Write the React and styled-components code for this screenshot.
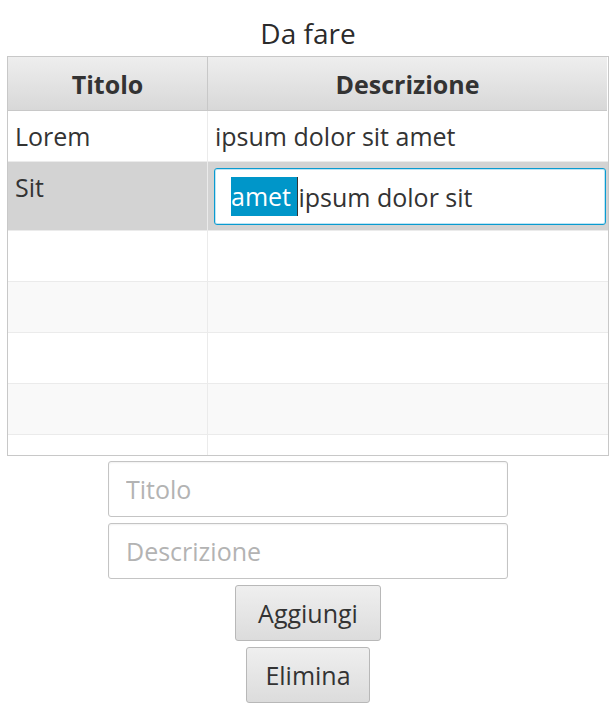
import React from 'react';
import styled, { createGlobalStyle, css } from 'styled-components';

const GlobalStyle = createGlobalStyle`
    html, body {
        margin: 0;
        padding: 0;
        background: #ffffff;
    }
    body {
        font-family: 'Open Sans', 'Noto Sans', sans-serif;
        color: #333333;
    }
`;

const Page = styled.div`
    width: 616px;
    height: 715px;
    display: flex;
    flex-direction: column;
    align-items: center;
    box-sizing: border-box;
    padding: 0 7px;
    background: #ffffff;
`;

const Title = styled.h1`
    margin: 0 0 4px;
    padding-top: 14px;
    font-size: 28px;
    font-weight: 400;
    line-height: 38px;
    color: #2b2b2b;
`;

const Table = styled.div`
    width: 100%;
    height: 400px;
    box-sizing: border-box;
    border: 1px solid #c8c8c8;
    display: flex;
    flex-direction: column;
    overflow: hidden;
    margin-bottom: 5px;
`;

const HeaderRow = styled.div`
    display: grid;
    grid-template-columns: 200px 1fr;
    height: 54px;
    flex-shrink: 0;
    box-sizing: border-box;
    border-bottom: 1px solid #c8c8c8;
    background: linear-gradient(to bottom, #eeeeee, #d8d8d8);
    margin-right: 1px;
`;

const HeaderCell = styled.div`
    display: flex;
    align-items: center;
    justify-content: center;
    font-size: 25px;
    font-weight: 700;
    color: #333333;
    border-right: ${(p) => (p.$last ? 'none' : '1px solid #c8c8c8')};
`;

const Row = styled.div`
    display: grid;
    grid-template-columns: 200px 1fr;
    flex-shrink: 0;
    min-height: 51px;
    box-sizing: border-box;
    border-bottom: 1px solid #ebebeb;
    background: ${(p) => (p.$selected ? '#d3d3d3' : p.$odd ? '#f9f9f9' : '#ffffff')};
`;

const Cell = styled.div`
    box-sizing: border-box;
    font-size: 25px;
    line-height: 34px;
    padding: 8px 7px;
    color: #333333;
    white-space: nowrap;
    overflow: hidden;
    border-right: ${(p) => (p.$last ? 'none' : '1px solid #ebebeb')};
    ${(p) =>
        p.$editing &&
        css`
            padding: 6px 2px 5px 6px;
        `}
`;

const EditField = styled.div`
    height: 57px;
    box-sizing: border-box;
    border: 1px solid #0a9bd0;
    border-radius: 3px;
    box-shadow: inset 0 0 0 1px #bfe4f3;
    background: #ffffff;
    padding: 0 16px;
    display: flex;
    align-items: center;
    font-size: 25px;
    color: #333333;
    white-space: pre;
`;

const Selection = styled.span`
    background: #0096c9;
    color: #ffffff;
    line-height: 39px;
    display: inline-block;
`;

const Caret = styled.span`
    display: inline-block;
    width: 1px;
    height: 39px;
    background: #333333;
`;

const Form = styled.div`
    display: flex;
    flex-direction: column;
    align-items: center;
    gap: 6px;
`;

const TextInput = styled.input`
    width: 400px;
    height: 56px;
    box-sizing: border-box;
    border: 1px solid #c4c4c4;
    border-radius: 3px;
    box-shadow: inset 0 1px 2px rgba(0, 0, 0, 0.06);
    padding: 0 17px;
    font-family: 'Open Sans', 'Noto Sans', sans-serif;
    font-size: 25px;
    color: #333333;
    background: #ffffff;
    outline: none;

    &::placeholder {
        color: #b3b3b3;
    }
`;

const Button = styled.button`
    height: 56px;
    box-sizing: border-box;
    padding: 0 ${(p) => p.$pad || 22}px;
    border: 1px solid #b8b8b8;
    border-radius: 3px;
    background: linear-gradient(to bottom, #efefef, #dcdcdc);
    font-family: 'Open Sans', 'Noto Sans', sans-serif;
    font-size: 25px;
    color: #333333;
    cursor: pointer;
`;

const rows = [
    { title: 'Lorem', desc: 'ipsum dolor sit amet' },
    { title: 'Sit', desc: 'ipsum dolor sit', selected: true },
    { empty: true },
    { empty: true },
    { empty: true },
    { empty: true },
    { empty: true },
];

function App() {
    return (
        <>
            <GlobalStyle />
            <Page>
                <Title>Da fare</Title>
                <Table>
                    <HeaderRow>
                        <HeaderCell>Titolo</HeaderCell>
                        <HeaderCell $last>Descrizione</HeaderCell>
                    </HeaderRow>
                    {rows.map((row, i) => (
                        <Row key={i} $odd={i % 2 === 1} $selected={row.selected}>
                            <Cell>{row.title}</Cell>
                            {row.selected ? (
                                <Cell $last $editing>
                                    <EditField>
                                        <Selection>amet </Selection>
                                        <Caret />
                                        {row.desc}
                                    </EditField>
                                </Cell>
                            ) : (
                                <Cell $last>{row.desc}</Cell>
                            )}
                        </Row>
                    ))}
                </Table>
                <Form>
                    <TextInput placeholder="Titolo" />
                    <TextInput placeholder="Descrizione" />
                    <Button $pad={22}>Aggiungi</Button>
                    <Button $pad={18}>Elimina</Button>
                </Form>
            </Page>
        </>
    );
}

export default App;
